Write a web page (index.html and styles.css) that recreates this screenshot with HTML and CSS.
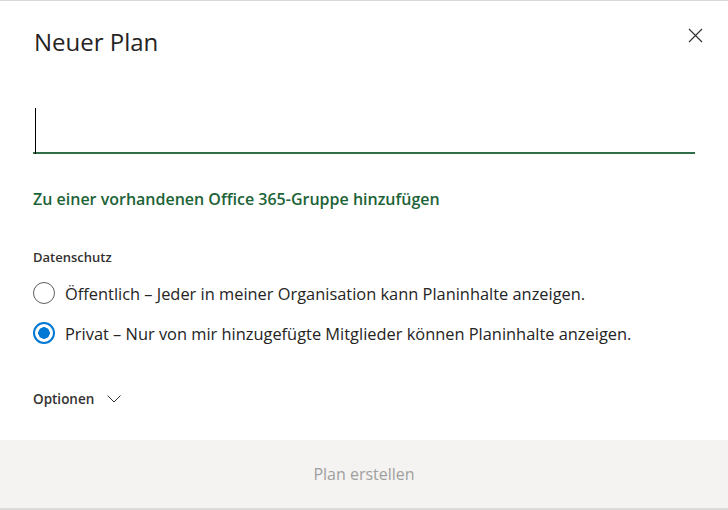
FILE: index.html
```html
<!DOCTYPE html>
<html>
<head>
<meta charset="utf-8">
<title>Neuer Plan</title>
<link rel="stylesheet" href="styles.css">
</head>
<body>
<div class="dialog">
    <div class="header">
        <h1 class="title">Neuer Plan</h1>
        <button class="close" aria-label="Schließen">
            <svg width="15" height="15" viewBox="0 0 15 15"><path d="M1 1 L14 14 M14 1 L1 14" stroke="#333" stroke-width="1.2" fill="none"/></svg>
        </button>
    </div>

    <div class="field">
        <span class="caret"></span>
    </div>

    <a class="group-link" href="#">Zu einer vorhandenen Office 365-Gruppe hinzufügen</a>

    <div class="privacy">
        <div class="label">Datenschutz</div>
        <label class="radio">
            <span class="dot"></span>
            Öffentlich – Jeder in meiner Organisation kann Planinhalte anzeigen.
        </label>
        <label class="radio checked">
            <span class="dot"></span>
            Privat – Nur von mir hinzugefügte Mitglieder können Planinhalte anzeigen.
        </label>
    </div>

    <div class="options">
        Optionen
        <svg width="14" height="8" viewBox="0 0 14 8"><path d="M0.5 0.5 L7 7 L13.5 0.5" stroke="#333" stroke-width="1" fill="none"/></svg>
    </div>
</div>
<div class="footer">
    <button class="create">Plan erstellen</button>
</div>
</body>
</html>
```

FILE: styles.css
```css
html, body{
    margin:0;
    padding:0;
}
body{
    width:728px;
    height:510px;
    background-color:white;
    font-family:"Open Sans", "Noto Sans", sans-serif;
    color:#323130;
    border-top:1px solid #d8d8d8;
    box-sizing:border-box;
    overflow:hidden;
}
.dialog{
    height:439px;
    padding:0 33px 0 33px;
    box-sizing:border-box;
}
.header{
    display:flex;
    justify-content:space-between;
    align-items:flex-start;
    height:70px;
}
.title{
    margin:26px 0 0 1px;
    font-size:24px;
    font-weight:400;
    line-height:30px;
    color:#252423;
}
.close{
    margin:25px -10px 0 0;
    border:none;
    background:none;
    padding:2px;
}
.field{
    margin-top:37px;
    height:44px;
    border-bottom:2px solid #2e6f47;
    margin-right:0;
    position:relative;
}
.caret{
    display:block;
    width:1px;
    height:46px;
    margin-left:2px;
    background-color:#000;
}
.group-link{
    display:block;
    margin-top:34px;
    font-size:16px;
    font-weight:600;
    color:#1c6337;
    text-decoration:none;
}
.privacy{
    margin-top:38px;
}
.label{
    font-size:13px;
    font-weight:600;
    color:#323130;
    margin-bottom:7px;
}
.radio{
    display:flex;
    align-items:center;
    gap:10px;
    font-size:16.4px;
    height:40px;
    color:#252423;
}
.dot{
    width:22px;
    height:22px;
    border:1px solid #605e5c;
    border-radius:50%;
    box-sizing:border-box;
    flex:none;
}
.checked .dot{
    border:2px solid #0078d4;
    background:radial-gradient(circle, #0078d4 5.5px, white 6px);
}
.options{
    margin-top:37px;
    font-size:13.5px;
    font-weight:600;
    display:flex;
    align-items:center;
    gap:13px;
}
.footer{
    height:68px;
    background-color:#f4f3f2;
    display:flex;
    justify-content:center;
    align-items:center;
    border-bottom:2px solid #dcdbda;
}
.create{
    border:none;
    background:none;
    font-family:"Open Sans", sans-serif;
    font-size:16px;
    color:#a19f9d;
}
```
